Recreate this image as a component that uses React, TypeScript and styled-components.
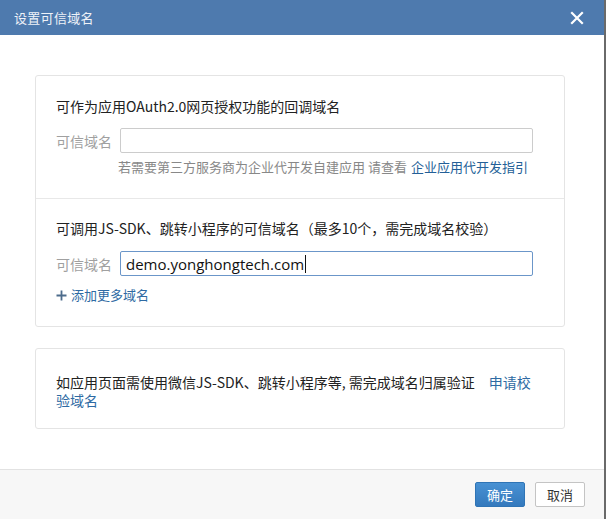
import React from 'react';
import styled, { createGlobalStyle } from 'styled-components';

const GlobalStyle = createGlobalStyle`
  html, body {
    margin: 0;
    padding: 0;
    background: #fff;
  }
  body {
    font-family: "Segoe UI", "Open Sans", "Noto Sans CJK SC", sans-serif;
    color: #333;
  }
`;

const Dialog = styled.div`
  width: 604px;
  height: 519px;
  border-right: 2px solid #6a6a6a;
  display: flex;
  flex-direction: column;
  background: #fff;
  overflow: hidden;
`;

const Header = styled.div`
  height: 35px;
  flex-shrink: 0;
  background: #4e7aae;
  display: flex;
  align-items: center;
  justify-content: space-between;
  padding: 0 20px 0 14px;
`;

const Title = styled.h1`
  margin: 0;
  font-family: "Noto Sans CJK SC", sans-serif;
  font-size: 13px;
  font-weight: 400;
  color: #eef2f8;
  letter-spacing: 0.3px;
`;

const CloseButton = styled.button`
  border: none;
  background: transparent;
  padding: 0;
  width: 14px;
  height: 14px;
  display: flex;
  cursor: pointer;
`;

const Body = styled.div`
  height: 434px;
  flex-shrink: 0;
  box-sizing: border-box;
  padding: 40px 39px 0 35px;
  display: flex;
  flex-direction: column;
  gap: 21px;
`;

const Card = styled.div`
  border: 1px solid #e4e4e4;
  border-radius: 3px;
  background: #fff;
`;

const Section = styled.div<{ $divider?: boolean }>`
  padding: ${p => (p.$divider ? '19px 31px 22px 20px' : '20px 31px 22px 20px')};
  border-top: ${p => (p.$divider ? '1px solid #e8e8e8' : 'none')};
  display: flex;
  flex-direction: column;
`;

const SectionTitle = styled.div`
  font-family: "Noto Sans CJK SC", sans-serif;
  font-size: 14px;
  line-height: 20px;
  color: #222;
  white-space: nowrap;
`;

const FieldRow = styled.div<{ $gap: number }>`
  display: flex;
  align-items: center;
  margin-top: ${p => p.$gap}px;
`;

const Label = styled.span`
  width: 64px;
  flex-shrink: 0;
  font-family: "Noto Sans CJK SC", sans-serif;
  font-size: 14px;
  color: #a0a0a0;
`;

const FieldBox = styled.div<{ $focused?: boolean }>`
  width: 413px;
  height: 25px;
  box-sizing: border-box;
  border: 1px solid ${p => (p.$focused ? '#6b96c9' : '#cccccc')};
  border-radius: 2px;
  background: #fff;
  display: flex;
  align-items: center;
  padding: 0 5px;
  font-family: "Open Sans", sans-serif;
  font-size: 15px;
  color: #111;
`;

const Caret = styled.span`
  display: inline-block;
  width: 1px;
  height: 18px;
  background: #111;
  margin-left: 1px;
`;

const Hint = styled.div`
  margin-top: 5px;
  padding-left: 62px;
  font-family: "Noto Sans CJK SC", sans-serif;
  font-size: 13px;
  line-height: 18px;
  color: #888;
  white-space: nowrap;
`;

const HintLink = styled.a`
  color: #245f97;
  text-decoration: none;
  margin-left: 4px;
`;

const AddMore = styled.button`
  margin-top: 10px;
  align-self: flex-start;
  border: none;
  background: transparent;
  padding: 0;
  display: flex;
  align-items: center;
  gap: 4px;
  font-family: "Noto Sans CJK SC", sans-serif;
  font-size: 13px;
  line-height: 18px;
  color: #2e6aa3;
  cursor: pointer;
`;

const Notice = styled.p`
  margin: 0;
  padding: 24px 31px 19px 20px;
  font-family: "Noto Sans CJK SC", sans-serif;
  font-size: 14px;
  line-height: 18px;
  color: #222;
`;

const NoticeLink = styled.a`
  color: #2e6aa3;
  text-decoration: none;
  margin-left: 14px;
`;

const Footer = styled.div`
  flex: 1;
  border-top: 1px solid #e2e2e2;
  background: #f7f7f7;
  display: flex;
  justify-content: flex-end;
  align-items: flex-start;
  gap: 10px;
  padding: 12px 19px 0 0;
`;

const Button = styled.button<{ $primary?: boolean }>`
  width: 50px;
  height: 25px;
  box-sizing: border-box;
  border-radius: 2px;
  border: 1px solid ${p => (p.$primary ? '#2f74b5' : '#c4c4c4')};
  background: ${p => (p.$primary ? 'linear-gradient(#4891d3, #3479bd)' : '#fff')};
  color: ${p => (p.$primary ? '#fff' : '#333')};
  font-family: "Noto Sans CJK SC", sans-serif;
  font-size: 13px;
  padding: 0;
  cursor: pointer;
`;

const CloseIcon = () => (
  <svg width="14" height="14" viewBox="0 0 14 14">
    <path d="M2 2 L12 12 M12 2 L2 12" stroke="#fff" strokeWidth="2.2" strokeLinecap="square" />
  </svg>
);

const PlusIcon = () => (
  <svg width="11" height="11" viewBox="0 0 11 11">
    <path d="M5.5 0.5 V10.5 M0.5 5.5 H10.5" stroke="#4d6c8c" strokeWidth="1.8" />
  </svg>
);

const App: React.FC = () => {
  return (
    <>
      <GlobalStyle />
      <Dialog>
        <Header>
          <Title>设置可信域名</Title>
          <CloseButton aria-label="关闭">
            <CloseIcon />
          </CloseButton>
        </Header>
        <Body>
          <Card>
            <Section>
              <SectionTitle>可作为应用OAuth2.0网页授权功能的回调域名</SectionTitle>
              <FieldRow $gap={12}>
                <Label>可信域名</Label>
                <FieldBox />
              </FieldRow>
              <Hint>
                若需要第三方服务商为企业代开发自建应用 请查看
                <HintLink href="#">企业应用代开发指引</HintLink>
              </Hint>
            </Section>
            <Section $divider>
              <SectionTitle>可调用JS-SDK、跳转小程序的可信域名（最多10个，需完成域名校验）</SectionTitle>
              <FieldRow $gap={13}>
                <Label>可信域名</Label>
                <FieldBox $focused>
                  demo.yonghongtech.com
                  <Caret />
                </FieldBox>
              </FieldRow>
              <AddMore>
                <PlusIcon />
                添加更多域名
              </AddMore>
            </Section>
          </Card>
          <Card>
            <Notice>
              如应用页面需使用微信JS-SDK、跳转小程序等, 需完成域名归属验证
              <NoticeLink href="#">申请校验域名</NoticeLink>
            </Notice>
          </Card>
        </Body>
        <Footer>
          <Button $primary>确定</Button>
          <Button>取消</Button>
        </Footer>
      </Dialog>
    </>
  );
};

export default App;
